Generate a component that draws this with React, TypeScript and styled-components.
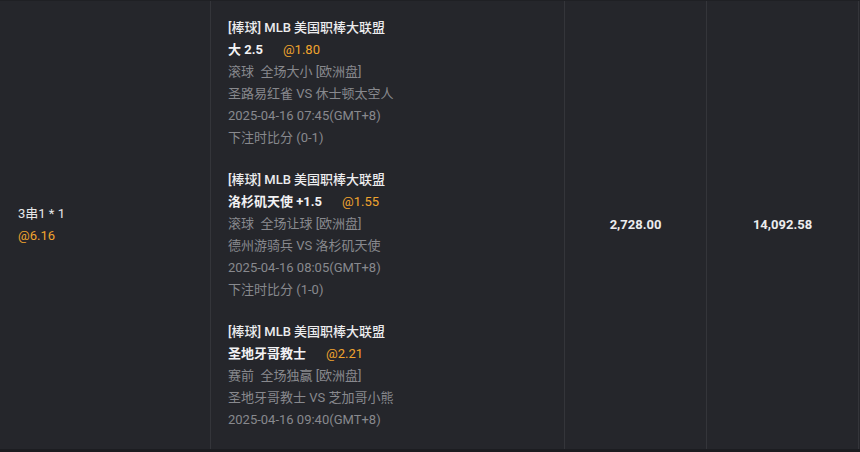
import React from "react";
import styled, { createGlobalStyle } from "styled-components";

const Global = createGlobalStyle`
  html, body { margin: 0; padding: 0; background: #1c1d21; }
  body { font-family: Roboto, "Noto Sans CJK SC", sans-serif; }
`;

const Row = styled.div`
  display: grid;
  grid-template-columns: 211px 354px 142px 152px 1px;
  width: 860px;
  height: 449px;
  background: #25262b;
  border-top: 1px solid #1f2024;
  box-sizing: border-box;
  font-size: 13px;
  color: #e6e6e8;
`;

const Cell = styled.div<{ $align?: "left" | "center" }>`
  display: flex;
  flex-direction: column;
  justify-content: center;
  align-items: ${(p) => (p.$align === "center" ? "center" : "flex-start")};
  border-right: 1px solid #34353a;
  padding: 0 18px;
  box-sizing: border-box;
  line-height: 22px;
`;

const Legs = styled.div`
  display: flex;
  flex-direction: column;
  justify-content: flex-start;
  gap: 20px;
  border-right: 1px solid #34353a;
  padding: 16px 17px 0;
  box-sizing: border-box;
  line-height: 22px;
`;

const Leg = styled.div`
  display: flex;
  flex-direction: column;
`;

const Title = styled.div`
  color: #ececee;
  font-weight: 500;
`;

const Pick = styled.div`
  color: #f2f2f4;
  font-weight: 700;
`;

const Odds = styled.span<{ $inline?: boolean }>`
  color: #f0a42e;
  font-weight: 400;
  margin-left: ${(p) => (p.$inline ? "20px" : "0")};
`;

const Info = styled.div`
  color: #88898e;
`;

const Strong = styled.div`
  font-weight: 700;
  color: #ececee;
`;

const Spacer = styled.div``;

type LegData = {
  title: string;
  pick: string;
  odds: string;
  info: string[];
};

const legs: LegData[] = [
  {
    title: "[棒球] MLB 美国职棒大联盟",
    pick: "大 2.5",
    odds: "@1.80",
    info: [
      "滚球\u00a0\u00a0全场大小 [欧洲盘]",
      "圣路易红雀 VS 休士顿太空人",
      "2025-04-16 07:45(GMT+8)",
      "下注时比分 (0-1)",
    ],
  },
  {
    title: "[棒球] MLB 美国职棒大联盟",
    pick: "洛杉矶天使 +1.5",
    odds: "@1.55",
    info: [
      "滚球\u00a0\u00a0全场让球 [欧洲盘]",
      "德州游骑兵 VS 洛杉矶天使",
      "2025-04-16 08:05(GMT+8)",
      "下注时比分 (1-0)",
    ],
  },
  {
    title: "[棒球] MLB 美国职棒大联盟",
    pick: "圣地牙哥教士",
    odds: "@2.21",
    info: [
      "赛前\u00a0\u00a0全场独赢 [欧洲盘]",
      "圣地牙哥教士 VS 芝加哥小熊",
      "2025-04-16 09:40(GMT+8)",
    ],
  },
];

export default function App() {
  return (
    <>
      <Global />
      <Row>
        <Cell>
          <div>3串1 * 1</div>
          <Odds>@6.16</Odds>
        </Cell>
        <Legs>
          {legs.map((l, i) => (
            <Leg key={i}>
              <Title>{l.title}</Title>
              <Pick>
                {l.pick}
                <Odds $inline>{l.odds}</Odds>
              </Pick>
              {l.info.map((t, j) => (
                <Info key={j}>{t}</Info>
              ))}
            </Leg>
          ))}
        </Legs>
        <Cell $align="center">
          <Strong>2,728.00</Strong>
        </Cell>
        <Cell $align="center">
          <Strong>14,092.58</Strong>
        </Cell>
        <Spacer />
      </Row>
    </>
  );
}
